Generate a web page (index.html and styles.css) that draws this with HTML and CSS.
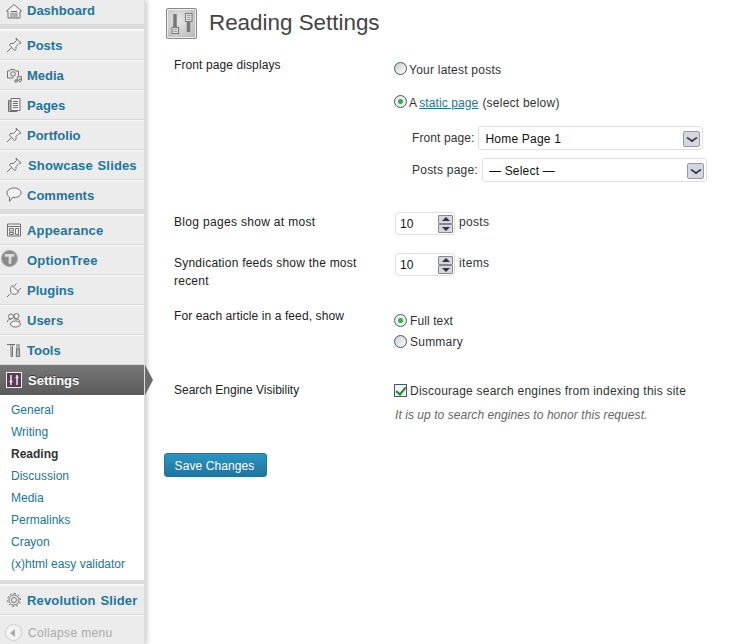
FILE: index.html
```html
<!DOCTYPE html>
<html lang="en">
<head>
    <meta charset="UTF-8">
    <title>Reading Settings</title>
    <link rel="stylesheet" href="styles.css">
</head>
<body>
    <nav class="sidebar">
        <ul class="menu">
            <li class="menu-item first"><a href="#"><svg class="icon" viewBox="0 0 16 16"><path class="filled" d="M.5 8 8 1.500 15.500 8H14v7H2V8z" /><path d="M5 8.500h6M5 9.500v5M7 9.500v5M9 9.500v5M11 9.500v5" /></svg>Dashboard</a></li>
        </ul>
        <div class="sep"></div>
        <ul class="menu">
            <li class="menu-item"><a href="#"><svg class="icon" viewBox="0 0 16 16"><path class="filled" d="M10 1l5 5-2 .5-3 3 0 3-1.500 1L3.500 8l1-1.500h3l3-3z" /><path d="M5.500 10.500 1 15" /></svg>Posts</a></li>
            <li class="menu-item"><a href="#"><svg class="icon" viewBox="0 0 16 16"><path d="M1.500 4h2l1-1.500h4l1 1.500h3v5M1.500 4v7h6" /><circle cx="7" cy="7" r="2.300" /><circle cx="10" cy="14" r="1.300" /><circle cx="14" cy="13.500" r="1.300" /><path d="M11.300 14V10l4 -.5v4" /></svg>Media</a></li>
            <li class="menu-item"><a href="#"><svg class="icon" viewBox="0 0 16 16"><path class="grey" d="M5 3.500H2.500v11H11v-1H5z" /><path class="filled" d="M5 1.500h9v12H5z" /><path d="M7 4.500h5M7 6.500h5M7 8.500h5M7 10.500h5" /></svg>Pages</a></li>
            <li class="menu-item"><a href="#"><svg class="icon" viewBox="0 0 16 16"><path class="filled" d="M10 1l5 5-2 .5-3 3 0 3-1.500 1L3.500 8l1-1.500h3l3-3z" /><path d="M5.500 10.500 1 15" /></svg>Portfolio</a></li>
            <li class="menu-item wide slides"><a href="#"><svg class="icon" viewBox="0 0 16 16"><path class="filled" d="M10 1l5 5-2 .5-3 3 0 3-1.500 1L3.500 8l1-1.500h3l3-3z" /><path d="M5.500 10.500 1 15" /></svg>Showcase Slides</a></li>
            <li class="menu-item"><a href="#"><svg class="icon" viewBox="0 0 16 16"><path class="filled" d="M8 1c4 0 7 2 7 4.800s-3 4.700-7 4.700H6.500L3.500 14.500V10C2 9.200 1 7.600 1 5.800 1 3 4 1 8 1z" /></svg>Comments</a></li>
        </ul>
        <div class="sep"></div>
        <ul class="menu">
            <li class="menu-item track"><a href="#"><svg class="icon" viewBox="0 0 16 16"><path class="filled" d="M1.500 2h13v12h-13z" /><path d="M1.500 4.500h13M3.500 6.500h4v2.500h-4zM3.500 10.500h4v2h-4zM9.500 6.500h3v6h-3z" /></svg>Appearance</a></li>
            <li class="menu-item tree track"><a href="#"><svg class="icon big" viewBox="0 0 16 16"><circle class="solid" cx="8" cy="8" r="7.500" /><path class="cut" d="M3.500 5h9M8.500 5v8" /></svg>OptionTree</a></li>
            <li class="menu-item"><a href="#"><svg class="icon" viewBox="0 0 16 16"><path d="M10.500 1.500 7 5M15 6l-3.500 3.500" /><path class="filled" d="M6 3.500 12.500 10c-2 2.500-5 3-6.500 1.500S3.500 6 6 3.500z" /><path d="M4.500 11.500 1 15" /></svg>Plugins</a></li>
            <li class="menu-item"><a href="#"><svg class="icon" viewBox="0 0 16 16"><circle cx="5" cy="4.500" r="2.500" /><circle cx="10.500" cy="4" r="2.500" /><path d="M1.500 10c0-2 1.500-3 3.500-3M8 7c3 0 6 .5 6 2.500" /><ellipse class="filled" cx="9.500" cy="12" rx="5" ry="3" /></svg>Users</a></li>
            <li class="menu-item"><a href="#"><svg class="icon" viewBox="0 0 16 16"><path d="M1 2.500h8M3.500 2.500l1.500 2v10h1.500v-10l1-2M11 2v5M13 2v5" /><path class="grey" d="M10.700 7h2.600l.5 7.500h-3.600z" /></svg>Tools</a></li>
            <li class="menu-item current"><a href="#"><svg class="icon boxed" viewBox="0 0 16 16"><rect class="box" x=".5" y=".5" width="15" height="15" /><path class="knob" d="M5 3v10M11 3v10M3.500 9.500h3M9.500 5.500h3" /></svg>Settings</a></li>
        </ul>
        <ul class="submenu">
            <li><a href="#">General</a></li>
            <li><a href="#">Writing</a></li>
            <li class="active"><a href="#">Reading</a></li>
            <li><a href="#">Discussion</a></li>
            <li><a href="#">Media</a></li>
            <li><a href="#">Permalinks</a></li>
            <li><a href="#">Crayon</a></li>
            <li><a href="#">(x)html easy validator</a></li>
        </ul>
        <div class="sep"></div>
        <ul class="menu">
            <li class="menu-item wide"><a href="#"><svg class="icon" viewBox="0 0 16 16"><circle cx="8" cy="8" r="2.500" /><circle cx="8" cy="8" r="5" /><path stroke-dasharray="2 2" d="M8 1.500a6.500 6.500 0 1 1-.01 0z" /></svg>Revolution Slider</a></li>
        </ul>
        <div class="collapse"><span class="collapse-btn"></span>Collapse menu</div>
    </nav>

    <main class="content">
        <header class="page-head">
            <div class="page-icon">
                <svg viewBox="0 0 29 29"><path class="slot" d="M8 5v19M21.500 5v18" /><rect class="knob-lg" x="5" y="18.500" width="6.500" height="6" /><rect class="knob-lg" x="18.500" y="4.500" width="6.500" height="8" /><path class="knob-line" d="M6.500 20.500h3.500M6.500 22.500h3.500M20 6.500h3.500M20 8.500h3.500M20 10.500h3.500" /></svg>
            </div>
            <h2>Reading Settings</h2>
        </header>

        <form>
            <table class="form-table">
                <tr class="row-front">
                    <th class="track-s">Front page displays</th>
                    <td>
                        <label class="radio-line top-radio first-radio track-m"><input type="radio" name="front">Your latest posts</label>
                        <label class="radio-line top-radio second-radio track-m"><input type="radio" name="front" checked>A<a href="#">static page</a>(select below)</label>
                        <div class="page-select">
                            <label class="track-s">Front page:</label>
                            <span class="select-wrap"><select><option>Home Page 1</option></select><span class="select-arrow"></span></span>
                        </div>
                        <div class="page-select">
                            <label class="track-m">Posts page:</label>
                            <span class="select-wrap"><select><option>— Select —</option></select><span class="select-arrow"></span></span>
                        </div>
                    </td>
                </tr>
                <tr class="row-posts">
                    <th class="track-l">Blog pages show at most</th>
                    <td class="track-l"><span class="spin"><input type="text" value="10"><span class="spin-btns"><i class="up"></i><i class="down"></i></span></span>posts</td>
                </tr>
                <tr class="row-feeds">
                    <th class="track-m">Syndication feeds show the most recent</th>
                    <td class="track-l"><span class="spin"><input type="text" value="10"><span class="spin-btns"><i class="up"></i><i class="down"></i></span></span>items</td>
                </tr>
                <tr class="row-article">
                    <th class="track-s">For each article in a feed, show</th>
                    <td>
                        <label class="radio-line track-s"><input type="radio" name="feed" checked>Full text</label>
                        <label class="radio-line track-m"><input type="radio" name="feed">Summary</label>
                    </td>
                </tr>
                <tr class="row-search">
                    <th>Search Engine Visibility</th>
                    <td>
                        <label class="check-line track-m"><input type="checkbox" checked>Discourage search engines from indexing this site</label>
                        <p class="description">It is up to search engines to honor this request.</p>
                    </td>
                </tr>
            </table>
            <button type="button" class="button-primary">Save Changes</button>
        </form>
    </main>
</body>
</html>
```

FILE: styles.css
```css
* {
    box-sizing: border-box;
}

html, body {
    height: 100%;
}

body {
    margin: 0;
    font-family: "Liberation Sans", Arial, sans-serif;
    font-size: 12px;
    color: #333;
    background-color: #fff;
    display: flex;
    overflow: hidden;
}

a {
    color: #21759b;
}

.track-s {
    letter-spacing: 0.1px;
}

.track-m {
    letter-spacing: 0.23px;
}

.track-l {
    letter-spacing: 0.32px;
}

/* sidebar */
.sidebar {
    width: 145px;
    flex-shrink: 0;
    height: 644px;
    background-color: #ececec;
    box-shadow: 2px 0 5px rgba(0, 0, 0, 0.22);
    border-right: 1px solid #ddd;
}

.menu, .submenu {
    list-style: none;
    margin: 0;
    padding: 0;
}

.menu-item a {
    display: flex;
    align-items: center;
    height: 30px;
    padding-left: 6px;
    font-size: 13px;
    font-weight: bold;
    text-decoration: none;
    color: #21759b;
    border-top: 1px solid #f8f8f8;
    border-bottom: 1px solid #d8d8d8;
}

.menu-item.first a {
    height: 25px;
    padding-bottom: 3px;
    border-top: none;
}

.menu-item.wide a {
    letter-spacing: 0.15px;
    word-spacing: 1px;
}

.menu-item.track a {
    letter-spacing: 0.2px;
}

.menu-item.slides svg {
    margin-right: 6px;
}

.icon {
    width: 16px;
    height: 16px;
    margin-right: 5px;
    flex-shrink: 0;
    fill: none;
    stroke: #707070;
    stroke-width: 1;
}

.icon .filled {
    fill: #f2f2f2;
}

.icon .grey {
    fill: #b8b8b8;
}

.icon.big {
    width: 17px;
    height: 17px;
    margin: -3px 9px 0 -5px;
}

.icon .solid {
    fill: #8a8a8a;
    stroke: #aaa;
}

.icon .cut {
    stroke: #dcdcdc;
    stroke-width: 2.5;
}

.sep {
    height: 5px;
    background-color: #dcdcdc;
    border-bottom: 1px solid #f8f8f8;
}

.menu-item.current {
    position: relative;
}

.menu-item.current a {
    color: #fff;
    background: linear-gradient(#777, #5b5b5b);
    border: none;
    text-shadow: 0 -1px 0 #333;
}

.menu-item.current svg {
    margin-right: 6px;
}

.menu-item.current::after {
    content: "";
    position: absolute;
    left: 145px;
    top: 0;
    border-style: solid;
    border-width: 15px 0 15px 8px;
    border-color: transparent transparent transparent #6a6a6a;
}

.icon.boxed .box {
    fill: #5a3a56;
    stroke: #eee;
}

.icon.boxed .knob {
    stroke: #eee;
    stroke-width: 1.500;
}

.submenu {
    background-color: #fff;
    padding: 4px 0 5px;
    height: 185px;
}

.submenu li {
    height: 22px;
    line-height: 22px;
    padding-left: 11px;
}

.submenu a {
    text-decoration: none;
    color: #21759b;
}

.submenu .active a {
    font-weight: bold;
    color: #333;
}

.collapse {
    display: flex;
    align-items: center;
    height: 29px;
    padding: 5px 0 0 5px;
    color: #aaa;
    letter-spacing: 0.35px;
    border-top: 1px solid #f8f8f8;
}

.collapse-btn {
    width: 17px;
    height: 17px;
    margin-right: 6px;
    border-radius: 50%;
    background-color: #f4f4f4;
    border: 1px solid #ccc;
    position: relative;
}

.collapse-btn::after {
    content: "";
    position: absolute;
    left: 4px;
    top: 4px;
    border-style: solid;
    border-width: 4px 5px 4px 0;
    border-color: transparent #aaa transparent transparent;
}

/* main area */
.content {
    flex: 1;
    padding: 8px 0 0 19px;
}

.page-head {
    display: flex;
    align-items: center;
    height: 30px;
    padding-left: 2px;
    margin-bottom: 10px;
}

.page-icon {
    width: 31px;
    height: 31px;
    margin-right: 12px;
    background: radial-gradient(circle at 40% 40%, #e6e6e6, #b4b4b4);
    border: 1px solid #888;
    border-radius: 2px;
    box-shadow: inset 0 0 0 1px #eee;
}

.page-icon svg {
    display: block;
    width: 29px;
    height: 29px;
}

.slot {
    fill: none;
    stroke: #777;
    stroke-width: 3.5;
}

.knob-lg {
    fill: #e4e4e4;
    stroke: #777;
}

.knob-line {
    fill: none;
    stroke: #999;
}

h2 {
    margin: 0;
    font-size: 22.4px;
    font-weight: normal;
    color: #444;
}

.form-table {
    border-collapse: collapse;
    margin-left: 10px;
}

.form-table th {
    width: 221px;
    padding: 0 30px 0 0;
    vertical-align: top;
    text-align: left;
    font-weight: normal;
    line-height: 18px;
    color: #222;
}

.form-table td {
    padding: 0;
    vertical-align: top;
    line-height: 18px;
}

.row-front th {
    padding-top: 8px;
}

.row-front td {
    height: 160px;
    padding-top: 11px;
}

.row-posts th {
    padding-top: 5px;
}

.row-posts td {
    height: 38px;
    padding-top: 4px;
    line-height: 20px;
}

.row-feeds th {
    padding-top: 8px;
}

.row-feeds td {
    padding-top: 7px;
    line-height: 20px;
}

.row-article th {
    padding-top: 17px;
}

.row-article td {
    height: 83px;
    padding-top: 20px;
}

.row-search th {
    padding-top: 8px;
}

.row-search td {
    padding-top: 7px;
}

input[type="radio"], input[type="checkbox"] {
    appearance: none;
    margin: 0 3px 0 -1px;
    width: 13px;
    height: 13px;
    flex-shrink: 0;
    background-color: #f0f0f0;
    border: 1px solid #3c5a78;
}

input[type="radio"] {
    border-radius: 50%;
    background: linear-gradient(135deg, #ccc, #fff);
}

input[type="radio"]:checked {
    background: radial-gradient(circle, #2fb53a 0, #2fb53a 2px, #eee 3px);
}

input[type="checkbox"] {
    position: relative;
    background-color: #f4f4f4;
}

input[type="checkbox"]:checked::after {
    content: "";
    position: absolute;
    left: 3px;
    top: 0;
    width: 4px;
    height: 8px;
    border: solid #1d8a2a;
    border-width: 0 2px 2px 0;
    transform: rotate(40deg);
}

.radio-line, .check-line {
    display: flex;
    align-items: center;
    height: 21px;
}

/* these two sit a little above their text */
.top-radio input {
    margin-right: 2px;
    margin-bottom: 3px;
}

.top-radio a {
    margin: 0 4px 0 2px;
    letter-spacing: 0.1px;
}

.first-radio {
    margin-bottom: 12px;
}

.second-radio {
    margin-bottom: 13px;
}

.page-select {
    display: flex;
    align-items: center;
    padding-left: 17px;
    height: 24px;
    margin-bottom: 8px;
}

.page-select label {
    margin-right: 4px;
}

.select-wrap {
    position: relative;
    display: block;
}

select {
    appearance: none;
    display: block;
    width: 225px;
    height: 24px;
    padding: 2px 0 0 6px;
    font-family: inherit;
    font-size: 12px;
    letter-spacing: 0.2px;
    color: #111;
    background-color: #fff;
    border: 1px solid #dfdfdf;
    border-radius: 3px;
}

.select-arrow {
    position: absolute;
    right: 3px;
    top: 5px;
    width: 17px;
    height: 16px;
    background-color: #d4d6e2;
    border: 1px solid #999;
    border-radius: 2px;
}

.select-arrow::after {
    content: "";
    position: absolute;
    left: 4px;
    top: 2px;
    width: 6px;
    height: 6px;
    border: solid #333;
    border-width: 0 2px 2px 0;
    transform: scaleY(0.7) rotate(45deg);
}

.spin {
    position: relative;
    display: inline-block;
    margin-right: 4px;
    vertical-align: top;
}

.spin input {
    display: block;
    width: 60px;
    height: 23px;
    padding: 1px 0 0 4px;
    font-family: inherit;
    font-size: 12px;
    color: #111;
    border: 1px solid #dfdfdf;
    border-radius: 3px;
}

.spin-btns {
    position: absolute;
    right: 2px;
    top: 3px;
    width: 15px;
    display: flex;
    flex-direction: column;
}

.spin-btns i {
    display: block;
    width: 15px;
    height: 9px;
    background-color: #d4d6e2;
    border: 1px solid #888;
    border-radius: 1px;
    position: relative;
}

.spin-btns i::after {
    content: "";
    position: absolute;
    left: 3px;
    border-style: solid;
    border-color: transparent;
}

.spin-btns .up::after {
    top: 1px;
    border-width: 0 4px 4px;
    border-bottom-color: #333;
}

.spin-btns .down::after {
    top: 2px;
    border-width: 4px 4px 0;
    border-top-color: #333;
}

.description {
    margin: 5px 0 0;
    font-style: italic;
    letter-spacing: 0.06px;
    color: #666;
}

.button-primary {
    display: block;
    margin-top: 29px;
    width: 103px;
    height: 24px;
    padding: 2px 2px 0 0;
    font-family: inherit;
    font-size: 12px;
    letter-spacing: 0.1px;
    color: #fff;
    background: linear-gradient(#2a95c5, #21759b);
    border: 1px solid #21759b;
    border-radius: 3px;
}
```
